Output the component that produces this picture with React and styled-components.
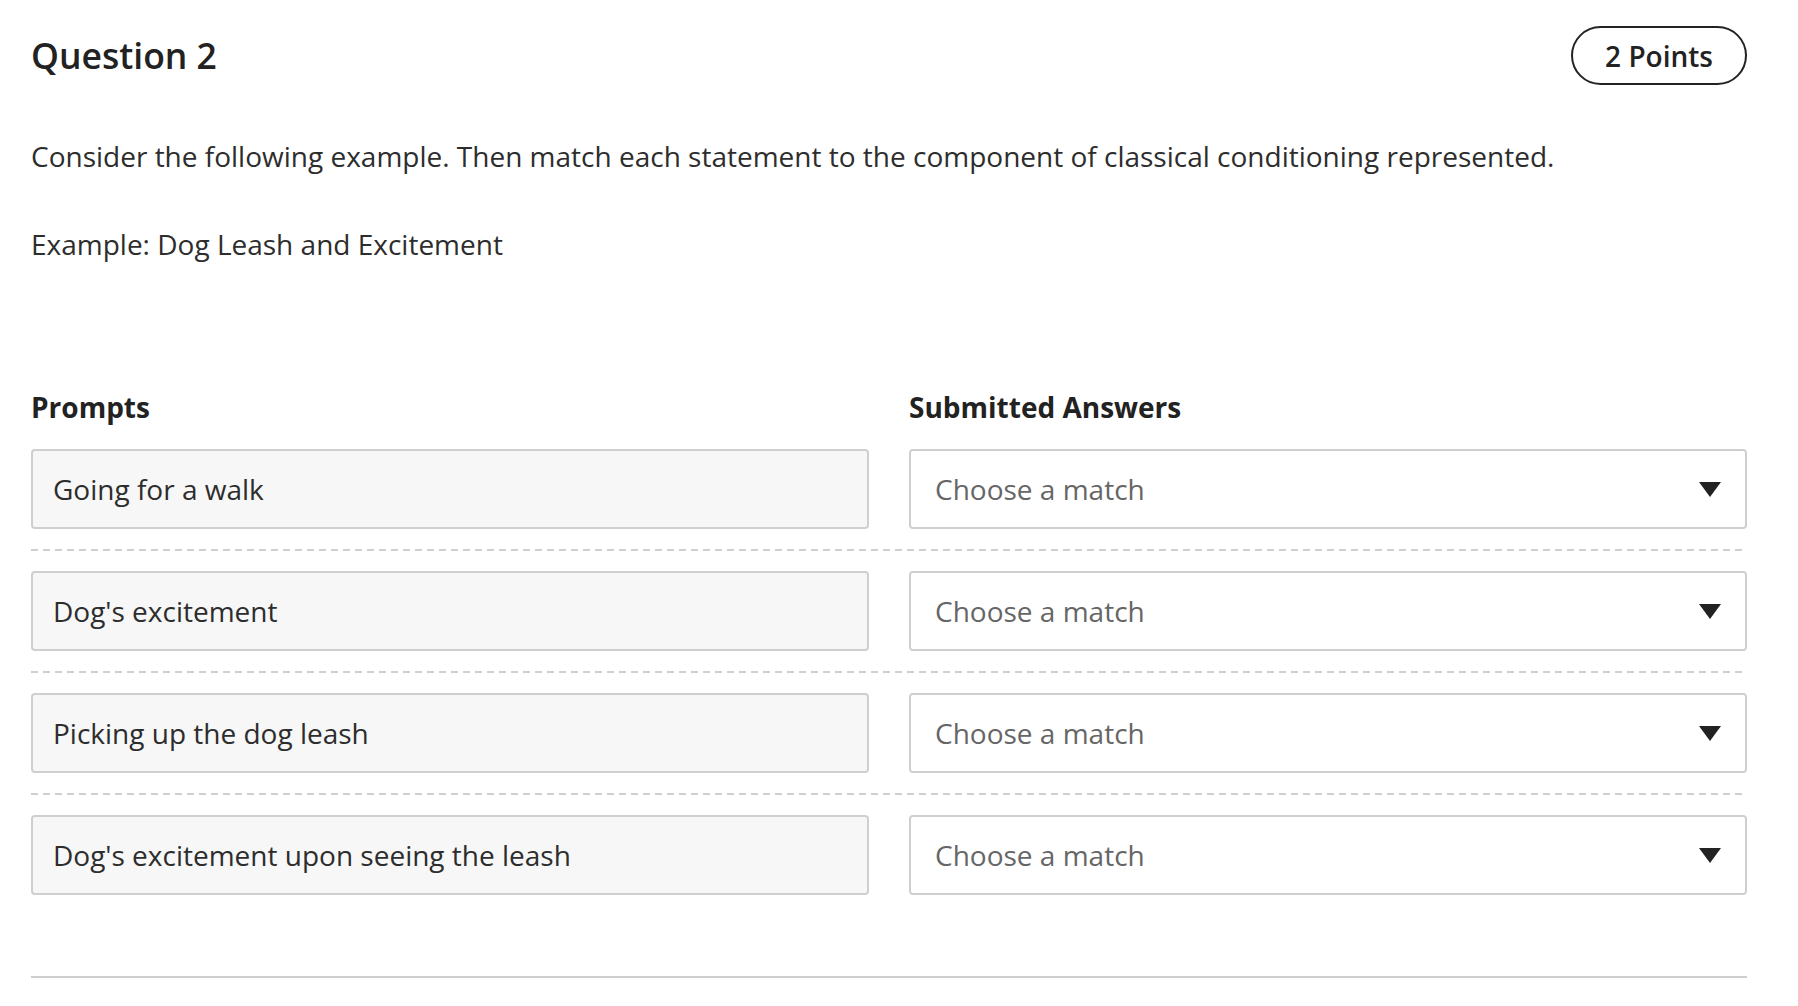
import React from "react";
import styled, { createGlobalStyle } from "styled-components";

const Global = createGlobalStyle`
  html, body { margin: 0; padding: 0; background: #fff; }
  body { font-family: "Open Sans", "Noto Sans", sans-serif; color: #2d2d2d; }
  * { box-sizing: border-box; }
`;

const Page = styled.div`
  padding: 26px 51px 30px 31px;
`;

const Header = styled.div`
  display: flex;
  justify-content: space-between;
  align-items: center;
`;

const Title = styled.h2`
  margin: 0;
  font-size: 35.5px;
  font-weight: 600;
  color: #222;
  line-height: 1.3;
`;

const Pill = styled.div`
  height: 59px;
  padding: 0 32px;
  border: 2px solid #232323;
  border-radius: 30px;
  display: flex;
  align-items: center;
  font-size: 28px;
  font-weight: 600;
  color: #222;
`;

const Para = styled.p`
  margin: ${(p) => p.$top}px 0 0;
  font-size: 28px;
  line-height: 39px;
  color: #2d2d2d;
`;

const Grid = styled.div`
  margin-top: 124px;
  display: grid;
  grid-template-columns: 1fr 1fr;
  column-gap: 40px;
`;

const ColHead = styled.div`
  font-size: 28px;
  font-weight: 700;
  line-height: 39px;
  color: #222;
  margin-bottom: 22px;
`;

const Row = styled.div`
  grid-column: 1 / -1;
  display: grid;
  grid-template-columns: 1fr 1fr;
  column-gap: 40px;
`;

const Divider = styled.div`
  grid-column: 1 / -1;
  height: 2px;
  margin: 20px 0 20px;
  background-image: linear-gradient(to right, #cfcfcf 7px, transparent 7px);
  background-size: 12px 2px;
  background-repeat: repeat-x;
`;

const PromptBox = styled.div`
  height: 80px;
  border: 2px solid #cfcfcf;
  border-radius: 4px;
  background: #f7f7f7;
  display: flex;
  align-items: center;
  padding: 0 20px;
  font-size: 28px;
  color: #2d2d2d;
`;

const Select = styled.div`
  height: 80px;
  border: 2px solid #cfcfcf;
  border-radius: 4px;
  background: #fff;
  display: flex;
  align-items: center;
  justify-content: space-between;
  padding: 0 24px 0 24px;
  font-size: 28px;
  color: #666;
`;

const Caret = styled.svg`
  width: 22px;
  height: 15px;
  display: block;
`;

const BottomRule = styled.div`
  margin-top: 81px;
  height: 2px;
  background: #cfcfcf;
`;

const prompts = [
  "Going for a walk",
  "Dog's excitement",
  "Picking up the dog leash",
  "Dog's excitement upon seeing the leash",
];

export default function App() {
  return (
    <Page>
      <Global />
      <Header>
        <Title>Question 2</Title>
        <Pill>2 Points</Pill>
      </Header>
      <Para $top={52}>
        Consider the following example. Then match each statement to the component of classical conditioning represented.
      </Para>
      <Para $top={49}>Example: Dog Leash and Excitement</Para>
      <Grid>
        <ColHead>Prompts</ColHead>
        <ColHead>Submitted Answers</ColHead>
        {prompts.map((p, i) => (
          <React.Fragment key={p}>
            {i > 0 && <Divider />}
            <Row>
              <PromptBox>{p}</PromptBox>
              <Select>
                <span>Choose a match</span>
                <Caret viewBox="0 0 22 15">
                  <path d="M0 0 H22 L11 15 Z" fill="#222" />
                </Caret>
              </Select>
            </Row>
          </React.Fragment>
        ))}
      </Grid>
      <BottomRule />
    </Page>
  );
}
